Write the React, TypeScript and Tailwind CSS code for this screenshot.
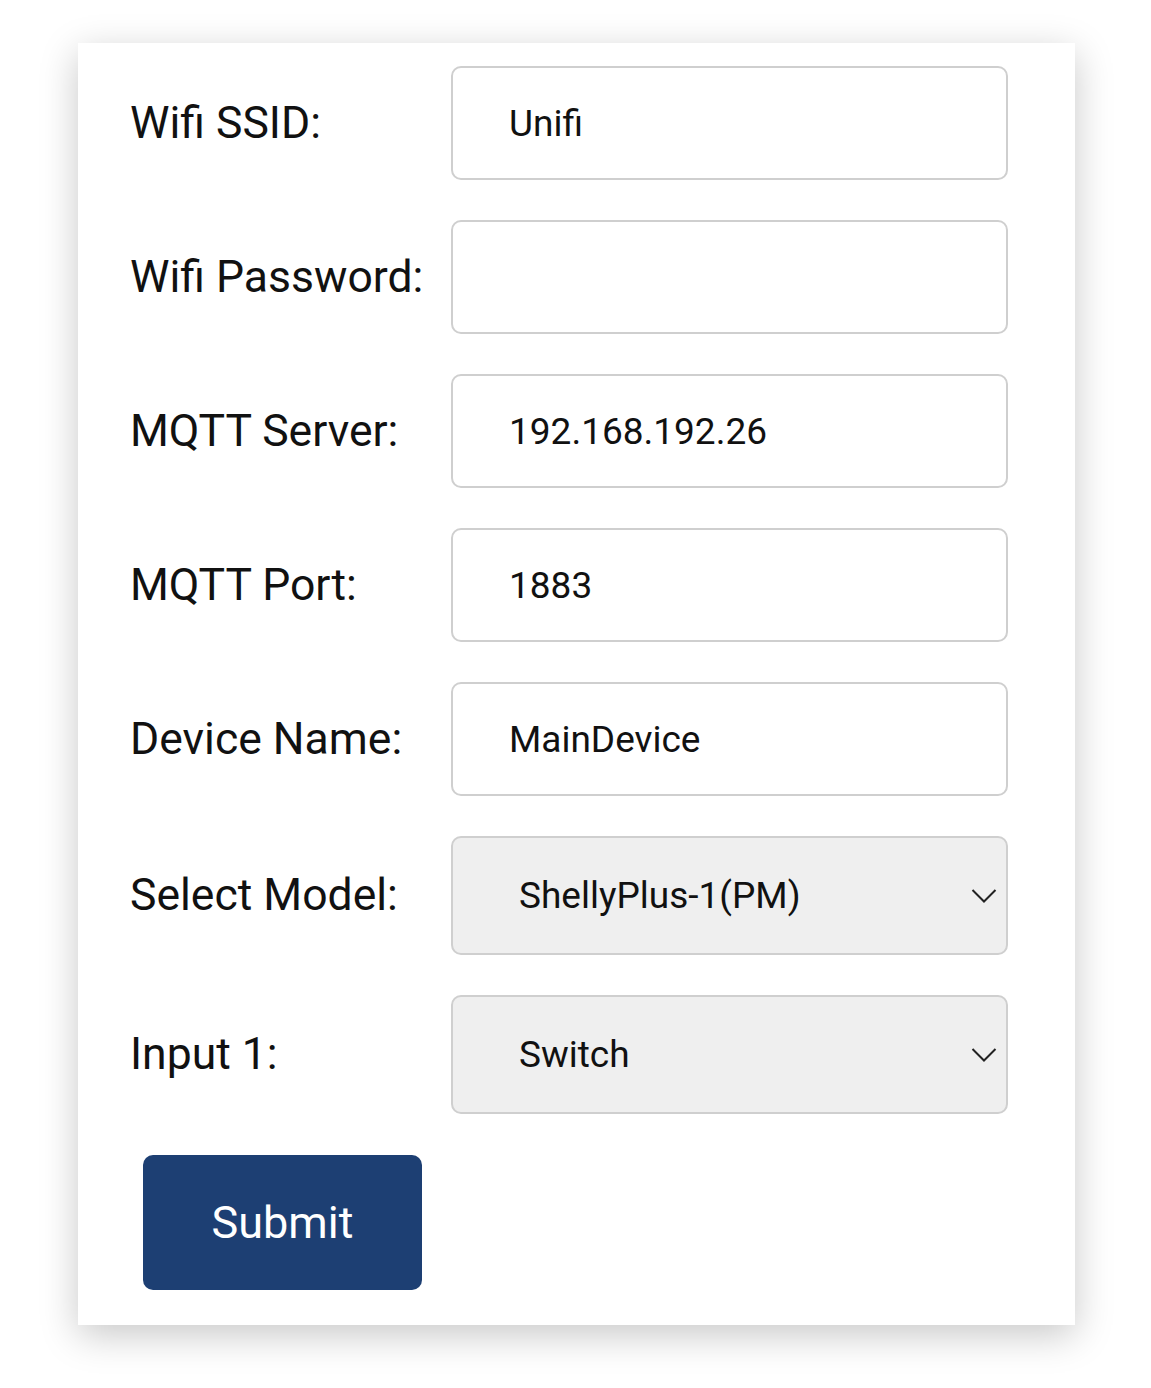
import React from 'react';

const fields = [
  { label: 'Wifi SSID:', value: 'Unifi' },
  { label: 'Wifi Password:', value: '' },
  { label: 'MQTT Server:', value: '192.168.192.26' },
  { label: 'MQTT Port:', value: '1883' },
  { label: 'Device Name:', value: 'MainDevice' },
];

const selects = [
  { label: 'Select Model:', value: 'ShellyPlus-1(PM)' },
  { label: 'Input 1:', value: 'Switch' },
];

const Chevron: React.FC = () => (
  <svg
    className="absolute right-[11px] top-1/2 -translate-y-1/2 pointer-events-none"
    width="26"
    height="16"
    viewBox="0 0 26 16"
    fill="none"
  >
    <path d="M1.5 2 L13 13.5 L24.5 2" stroke="#222" strokeWidth="2" />
  </svg>
);

export default function App() {
  return (
    <div className="min-h-screen bg-white pl-[78px] pt-[43px] pb-[60px] font-['Roboto',sans-serif] text-[#111]">
      <form className="w-[997px] bg-white shadow-[0_10px_36px_rgba(0,0,0,0.22)] pl-[53px] pr-[66px] pt-[23px] pb-[35px] flex flex-col gap-[40px]">
        {fields.map((f) => (
          <div key={f.label} className="flex items-center">
            <label className="w-[321px] shrink-0 -ml-[1px] text-[44.5px] leading-none">{f.label}</label>
            <input
              type="text"
              defaultValue={f.value}
              className="w-[557px] h-[114px] border-2 border-[#cfcfcf] rounded-[10px] bg-white pl-[56px] text-[37px] text-[#111] outline-none font-['Roboto',sans-serif]"
            />
          </div>
        ))}
        {selects.map((s) => (
          <div key={s.label} className="flex items-center">
            <label className="w-[321px] shrink-0 -ml-[1px] text-[44.5px] leading-none">{s.label}</label>
            <div className="relative w-[557px] h-[119px]">
              <select
                defaultValue={s.value}
                className="appearance-none w-full h-full border-2 border-[#cfcfcf] rounded-[10px] bg-[#efefef] pl-[66px] text-[37px] text-[#111] outline-none font-['Roboto',sans-serif]"
              >
                <option>{s.value}</option>
              </select>
              <Chevron />
            </div>
          </div>
        ))}
        <div className="pl-[12px] pt-[1px]">
          <button
            type="button"
            className="w-[279px] h-[135px] rounded-[10px] bg-[#1d3f73] text-white text-[45px] font-['Roboto',sans-serif]"
          >
            Submit
          </button>
        </div>
      </form>
    </div>
  );
}
